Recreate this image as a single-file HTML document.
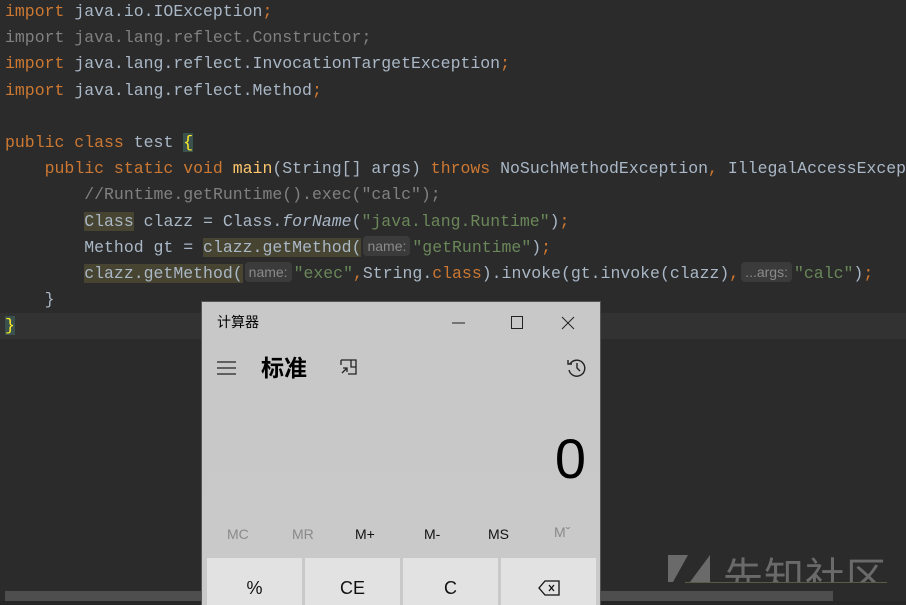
<!DOCTYPE html>
<html><head><meta charset="utf-8"><style>
*{margin:0;padding:0;box-sizing:border-box}
html,body{width:906px;height:605px;overflow:hidden}
body{background:#2b2b2b;position:relative;font-family:"Liberation Mono",monospace}
.code{position:absolute;left:5px;top:-1px;font-size:16.5px;line-height:26.2px;color:#a9b7c6;white-space:pre}
.k{color:#cc7832}.s{color:#6a8759}.c{color:#808080}.m{color:#ffc66d}.i{font-style:italic;color:#a9b7c6}
.hl{background:#474531}
.h{display:inline-block;background:#3b3b3b;color:#8a8a8a;font-family:"Liberation Sans",sans-serif;font-size:14px;line-height:20px;padding:0 4px;border-radius:4px;margin:0 2px;vertical-align:1px}
.cur{position:absolute;left:0;top:313px;width:906px;height:26px;background:#323232}
.calc{position:absolute;left:201px;top:301px;width:400px;height:304px;background:linear-gradient(#c8c8c8,#c9c9c9);border:1px solid #555;border-bottom:none;font-family:"Liberation Sans","Noto Sans CJK SC",sans-serif;color:#000;overflow:hidden}
.btn{position:absolute;top:256px;height:50px;width:95px;background:#e2e2e2;text-align:center;font-size:18px;line-height:60px;color:#111}
.mem{position:absolute;top:224px;font-size:14px;color:#111}
</style></head><body>
<div class="cur"></div>
<div class="code"><span class="k">import </span>java.io.IOException<span class="k">;</span>
<span class="c">import java.lang.reflect.Constructor;</span>
<span class="k">import </span>java.lang.reflect.InvocationTargetException<span class="k">;</span>
<span class="k">import </span>java.lang.reflect.Method<span class="k">;</span>

<span class="k">public class </span>test <span style="background:#3b514d;color:#ffef28">{</span>
    <span class="k">public static void </span><span class="m">main</span>(String[] args) <span class="k">throws </span>NoSuchMethodException<span class="k">, </span>IllegalAccessException
        <span class="c">//Runtime.getRuntime().exec("calc");</span>
        <span class="hl">Class</span> clazz = Class.<span class="i">forName</span>(<span class="s">"java.lang.Runtime"</span>)<span class="k">;</span>
        Method gt = <span class="hl">clazz.getMethod(</span><span class="h">name:</span><span class="s">"getRuntime"</span>)<span class="k">;</span>
        <span class="hl">clazz.getMethod(</span><span class="h">name:</span><span class="s">"exec"</span><span class="k">,</span>String.<span class="k">class</span>).invoke(gt.invoke(clazz)<span class="k">,</span><span class="h">...args:</span><span class="s">"calc"</span>)<span class="k">;</span>
    }
<span style="background:#3b514d;color:#ffef28">}</span></div>
<div style="position:absolute;left:0;top:601px;width:906px;height:4px;background:#262626"></div>
<div style="position:absolute;left:5px;top:591px;width:828px;height:10px;background:#4e4e4e"></div>
<svg width="45" height="30" style="position:absolute;left:668px;top:555px"><polygon points="0,0 20,0 5,27 0,27" fill="#6a6a6a"/><polygon points="42,0 42,27 22,27" fill="#6a6a6a"/></svg>
<div style="position:absolute;left:723px;top:553px;width:165px;height:29px;overflow:hidden">
<div style="font-family:'Noto Sans CJK SC',sans-serif;font-size:40px;color:#6a6a6a;letter-spacing:1px;line-height:46px;margin-top:-2px">先知社区</div></div>
<div style="position:absolute;left:685px;top:582px;width:202px;height:1px;background:#5a5a45"></div>
<div class="calc">
<div style="position:absolute;left:15px;top:10px;font-size:14px">计算器</div>
<svg style="position:absolute;left:245px;top:12px" width="130" height="20"><line x1="5" y1="9" x2="18" y2="9" stroke="#222"/><rect x="64.5" y="2.5" width="11" height="12" fill="none" stroke="#222"/><path d="M120 3L132 15M132 3L120 15" stroke="#222" transform="translate(-5,0)"/></svg>
<svg style="position:absolute;left:14px;top:58px" width="22" height="16"><path d="M1 2H20M1 8H20M1 14H20" stroke="#222" stroke-width="1.3"/></svg>
<div style="position:absolute;left:59px;top:47px;font-size:23px;font-weight:bold;font-family:'Noto Sans CJK SC',sans-serif">标准</div>
<svg style="position:absolute;left:138px;top:57px" width="18" height="18"><path d="M1 1H16V15H8M11 1V8H16M1 1V6M2 14L7 9M3 9H7V13" stroke="#222" fill="none" stroke-width="1.3"/></svg>
<svg style="position:absolute;left:364px;top:55px" width="22" height="22"><path d="M4 7A8 8 0 1 1 3 13M2 3V7H6M11 6V11L14 14" stroke="#222" fill="none" stroke-width="1.4"/></svg>
<div style="position:absolute;right:14px;top:127px;font-size:56px;line-height:60px">0</div>
<div class="mem" style="left:25px;color:#8a8a8a">MC</div>
<div class="mem" style="left:90px;color:#8a8a8a">MR</div>
<div class="mem" style="left:153px">M+</div>
<div class="mem" style="left:222px">M-</div>
<div class="mem" style="left:286px">MS</div>
<div class="mem" style="left:352px;color:#8a8a8a;top:222px">Mˇ</div>
<div class="btn" style="left:5px">%</div>
<div class="btn" style="left:103px">CE</div>
<div class="btn" style="left:201px">C</div>
<div class="btn" style="left:299px"><svg width="22" height="16" style="margin-top:22px"><path d="M7 1H21V15H7L1 8Z" fill="none" stroke="#111" stroke-width="1.3"/><path d="M11 5L16 11M16 5L11 11" stroke="#111" stroke-width="1.3"/></svg></div>
</div>
</body></html>
